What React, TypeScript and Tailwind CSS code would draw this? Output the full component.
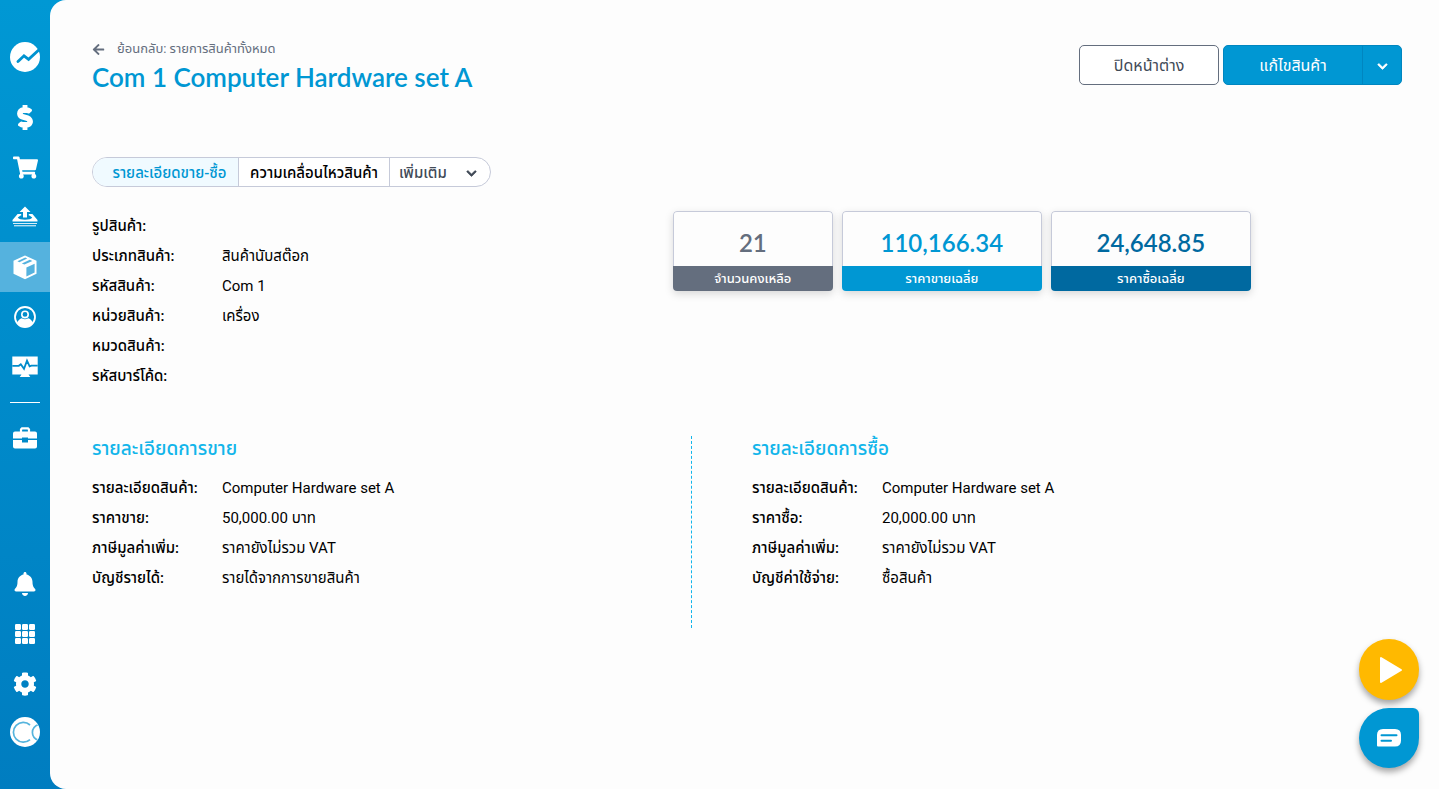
import React from "react";
import {
  FaArrowLeft,
  FaBell,
  FaChevronDown,
  FaCog,
  FaDollarSign,
  FaShoppingCart,
} from "react-icons/fa";

const Logo = () => (
  <svg viewBox="0 0 30 30" className="h-[30px] w-[30px]">
    <circle cx="15" cy="15" r="15" fill="#fff" />
    <path
      d="M8 19.6 14 13.8 18.6 17.4 29.5 7.4"
      fill="none"
      stroke="#0093d0"
      strokeWidth="2.8"
      strokeLinecap="round"
      strokeLinejoin="miter"
    />
  </svg>
);

const TrayIcon = () => (
  <svg viewBox="0 0 26 22" className="h-[22px] w-[26px]" fill="#fff">
    <path d="M13 .5 18.500 6H15v5.400h-4V6H7.500z" />
    <path d="M5.600 8h3.600v1.400h-.6L5.800 11.600C6.500 13 9.500 13.800 13 13.800s6.500-.8 7.200-2.200L17.400 9.400h-.6V8h3.600l5.100 6v1.600H.5V14z" />
    <path d="M1 17h24v1H1z" opacity=".85" />
    <path d="M2 19h22v1.400H2z" opacity=".7" />
  </svg>
);

const BoxIcon = () => (
  <svg viewBox="0 0 24 25" className="h-[25px] w-6">
    <path d="M12 .5 23.500 5.800v13L12 24.200.500 18.800v-13z" fill="#fff" />
    <path d="M13.400 12.600 21.600 8.800v8.800l-8.200 4z" fill="#55b2de" />
    <path d="M4.400 6.200 12.200 2.600l2 .9-7.800 3.700zM8.800 8.400l8-3.700 2.600 1.200-8 3.700z" fill="#55b2de" />
  </svg>
);

const ContactIcon = () => (
  <svg viewBox="0 0 22 22" className="h-[22px] w-[22px]">
    <circle cx="11" cy="11" r="10" fill="none" stroke="#fff" strokeWidth="1.800" />
    <circle cx="11" cy="8.400" r="3.200" fill="none" stroke="#fff" strokeWidth="1.600" />
    <path d="M3.400 17c.6-3 2.600-4.300 4.400-4.700 2 1.300 4.400 1.300 6.400 0 1.800.4 3.800 1.700 4.400 4.700-2 2.700-4.600 4-7.600 4s-5.600-1.300-7.600-4z" fill="#fff" />
  </svg>
);

const MonitorIcon = () => (
  <svg viewBox="0 0 26 22" className="h-[22px] w-[26px]">
    <path d="M.3.5h25.400v18H16.500l1.800 2.500H7.700l1.800-2.500H.3z" fill="#fff" />
    <path d="M.3 9.800H6.800l2-1.600 3.200 4.600 3-8.200 2.600 5.800 1.800-.8h6.300" fill="none" stroke="#008ccb" strokeWidth="1.800" />
  </svg>
);

const BriefcaseIcon = () => (
  <svg viewBox="0 0 24 22" className="h-[22px] w-6">
    <path d="M8 5V2.400L9 1.400h6l1 1V5" fill="none" stroke="#fff" strokeWidth="2.200" />
    <path d="M2 4.600h20a2 2 0 0 1 2 2v5H15v-1H9v1H0v-5a2 2 0 0 1 2-2zM0 13h9v2.400h6V13h9v6.400a2 2 0 0 1-2 2H2a2 2 0 0 1-2-2z" fill="#fff" />
  </svg>
);

const GridIcon = () => (
  <svg viewBox="0 0 20 20" className="h-5 w-5" fill="#fff">
    {[0, 7, 14].map((y) =>
      [0, 7, 14].map((x) => (
        <rect key={x + "-" + y} x={x} y={y} width="6" height="6" rx="1.200" />
      ))
    )}
  </svg>
);

const CompanyLogo = () => (
  <svg viewBox="0 0 30 30" className="h-[30px] w-[30px]">
    <defs>
      <clipPath id="company">
        <circle cx="15" cy="15" r="14.500" />
      </clipPath>
    </defs>
    <circle cx="15" cy="15" r="15" fill="#fff" />
    <g clipPath="url(#company)" fill="none" stroke="#55b4dd" strokeWidth="1.700">
      <path d="M20 8A9.900 9.900 0 1 0 20 22.600" />
      <path d="M29 7.200Q22.400 9.600 22.400 15.400T29 23.600" />
    </g>
  </svg>
);

const topMenu = [
  { name: "sales", icon: <FaDollarSign className="h-[25px] w-6" stroke="currentColor" strokeWidth="36" /> },
  { name: "purchases", icon: <FaShoppingCart className="h-[23px] w-[25px]" /> },
  { name: "expenses", icon: <TrayIcon /> },
  { name: "products", icon: <BoxIcon />, active: true },
  { name: "contacts", icon: <ContactIcon /> },
  { name: "accounting", icon: <MonitorIcon /> },
];

const bottomMenu = [
  { name: "notifications", icon: <FaBell className="h-6 w-6" /> },
  { name: "apps", icon: <GridIcon /> },
  { name: "settings", icon: <FaCog className="h-6 w-6" /> },
];

const product = [
  { label: "รูปสินค้า:", value: "" },
  { label: "ประเภทสินค้า:", value: "สินค้านับสต๊อก" },
  { label: "รหัสสินค้า:", value: "Com 1" },
  { label: "หน่วยสินค้า:", value: "เครื่อง" },
  { label: "หมวดสินค้า:", value: "" },
  { label: "รหัสบาร์โค้ด:", value: "" },
];

const selling = [
  { label: "รายละเอียดสินค้า:", value: "Computer Hardware set A" },
  { label: "ราคาขาย:", value: "50,000.00 บาท" },
  { label: "ภาษีมูลค่าเพิ่ม:", value: "ราคายังไม่รวม VAT" },
  { label: "บัญชีรายได้:", value: "รายได้จากการขายสินค้า" },
];

const buying = [
  { label: "รายละเอียดสินค้า:", value: "Computer Hardware set A" },
  { label: "ราคาซื้อ:", value: "20,000.00 บาท" },
  { label: "ภาษีมูลค่าเพิ่ม:", value: "ราคายังไม่รวม VAT" },
  { label: "บัญชีค่าใช้จ่าย:", value: "ซื้อสินค้า" },
];

const stats = [
  { label: "จำนวนคงเหลือ", value: "21", size: "w-40", text: "text-[#646e7e]", bg: "bg-[#646e7e]" },
  { label: "ราคาขายเฉลี่ย", value: "110,166.34", size: "w-[200px]", text: "text-[#0097d3]", bg: "bg-[#0097d3]" },
  { label: "ราคาซื้อเฉลี่ย", value: "24,648.85", size: "w-[200px]", text: "text-[#0069a0]", bg: "bg-[#0069a0]" },
];

const MenuButton = ({ name, icon, active }: { name: string; icon: React.ReactNode; active?: boolean }) => (
  <button
    type="button"
    aria-label={name}
    className={
      active
        ? "flex h-[50px] w-full items-center justify-center bg-[#55b2de]"
        : "flex h-[50px] w-full items-center justify-center"
    }
  >
    {icon}
  </button>
);

const Details = ({ items }: { items: { label: string; value: string }[] }) => (
  <dl className="text-[15px] leading-[30px] text-black">
    {items.map((item) => (
      <div key={item.label} className="flex">
        <dt className="w-[130px] shrink-0 font-medium">{item.label}</dt>
        <dd>{item.value}</dd>
      </div>
    ))}
  </dl>
);

const App = () => {
  return (
    <div className="flex min-h-screen bg-linear-to-b from-[#0098d4] to-[#007dc0] font-['Roboto','Noto_Sans_Thai','Noto_Sans',sans-serif]">
      <nav className="flex w-[50px] shrink-0 flex-col items-center pt-[42px] pb-[42px] text-white">
        <a href="#" aria-label="home" className="mb-5">
          <Logo />
        </a>
        {topMenu.map((item) => (
          <MenuButton key={item.name} {...item} />
        ))}
        <div className="my-[10px] h-px w-[30px] bg-white" />
        <MenuButton name="payroll" icon={<BriefcaseIcon />} />
        <div className="mt-auto w-full">
          {bottomMenu.map((item) => (
            <MenuButton key={item.name} {...item} />
          ))}
        </div>
        <a href="#" aria-label="company" className="mt-2">
          <CompanyLogo />
        </a>
      </nav>

      <main className="min-w-0 grow rounded-l-2xl bg-[#fdfdfd] pt-[39px] pr-[27px] pl-[42px]">
        <header className="flex items-start justify-between pr-[10px]">
          <div>
            <a href="#" className="flex items-center gap-3 text-[13px] leading-5 text-[#646e7e]">
              <FaArrowLeft className="h-[13px] w-[13px]" />
              ย้อนกลับ: รายการสินค้าทั้งหมด
            </a>
            <h1 className="font-[Lato,sans-serif] text-[26px] leading-9 font-semibold text-[#0097d3]">
              Com 1 Computer Hardware set A
            </h1>
          </div>
          <div className="mt-[6px] flex gap-1 text-base">
            <button type="button" className="h-10 w-[140px] rounded-[5px] border border-[#646e7e] bg-white pt-0.5 text-[#414a57]">
              ปิดหน้าต่าง
            </button>
            <div className="flex h-10 overflow-hidden rounded-[5px] border border-[#0086c0] bg-[#0097d3] text-white">
              <button type="button" className="w-[138px] pt-0.5">
                แก้ไขสินค้า
              </button>
              <button type="button" aria-label="more" className="flex w-[39px] items-center justify-center border-l border-[#0086c0] pt-0.5">
                <FaChevronDown className="h-[11px] w-[11px]" stroke="currentColor" strokeWidth="30" />
              </button>
            </div>
          </div>
        </header>

        <div className="mt-[62px] inline-flex h-[30px] overflow-hidden rounded-full border border-[#c6cad9] bg-white text-[15px]">
          <button type="button" className="w-[145px] bg-[#f0faff] pt-0.5 pl-2 font-medium text-[#0097d3]">
            รายละเอียดขาย-ซื้อ
          </button>
          <button type="button" className="w-[152px] border-x border-[#c6cad9] pt-0.5 font-medium text-black">
            ความเคลื่อนไหวสินค้า
          </button>
          <button type="button" className="flex w-[100px] items-center justify-between pt-0.5 pr-[13px] pl-[9px] font-medium text-[#414a57]">
            เพิ่มเติม
            <FaChevronDown className="h-[11px] w-[11px]" stroke="currentColor" strokeWidth="30" />
          </button>
        </div>

        <section className="mt-6 flex items-start">
          <div className="w-[44%] shrink-0">
            <Details items={product} />
          </div>
          <div className="flex gap-[9px]">
            {stats.map((item) => (
              <div key={item.label} className={item.size + " overflow-hidden rounded-[4px] text-center shadow-[0_3px_8px_rgba(0,0,0,0.15)]"}>
                <p className={item.text + " h-[55px] rounded-t-[4px] border border-b-0 border-[#c6cad9] bg-[#fdfdfd] pt-1 font-[Lato,sans-serif] text-2xl leading-[54px] font-semibold"}>
                  {item.value}
                </p>
                <p className={item.bg + " text-[13px] leading-[25px] font-medium text-white"}>{item.label}</p>
              </div>
            ))}
          </div>
        </section>

        <section className="mt-[45px] grid grid-cols-2">
          <div className="mr-[60px] min-h-48 border-r border-dashed border-[#12b5ea]">
            <h2 className="mb-3 text-[19px] leading-[25px] font-medium text-[#12b5ea]">รายละเอียดการขาย</h2>
            <Details items={selling} />
          </div>
          <div>
            <h2 className="mb-3 text-[19px] leading-[25px] font-medium text-[#12b5ea]">รายละเอียดการซื้อ</h2>
            <Details items={buying} />
          </div>
        </section>
      </main>

      <div className="fixed right-5 bottom-[21px] flex flex-col gap-2">
        <button type="button" aria-label="play" className="flex h-[61px] w-[60px] items-center justify-center rounded-full bg-[#ffb900] shadow-[0_4px_6px_rgba(0,0,0,0.35)]">
          <svg viewBox="0 0 24 28" className="ml-1 h-7 w-6">
            <path d="M2 2v24l20-12z" fill="#fff" stroke="#fff" strokeWidth="2" strokeLinejoin="round" />
          </svg>
        </button>
        <button type="button" aria-label="chat" className="flex h-[60px] w-[60px] items-center justify-center rounded-[30px] rounded-tr-[6px] bg-[#0097d3] shadow-[0_4px_6px_rgba(0,0,0,0.35)]">
          <svg viewBox="0 0 24 18" className="h-[18px] w-6">
            <path d="M6 0h12q6 0 6 6v5.500q0 6-6 6H1q-1 0-1-1V6q0-6 6-6z" fill="#fff" />
            <path d="M4.500 6.200h15M4.500 11.700h9.500" stroke="#0097d3" strokeWidth="2" strokeLinecap="round" />
          </svg>
        </button>
      </div>
    </div>
  );
};

export default App;
